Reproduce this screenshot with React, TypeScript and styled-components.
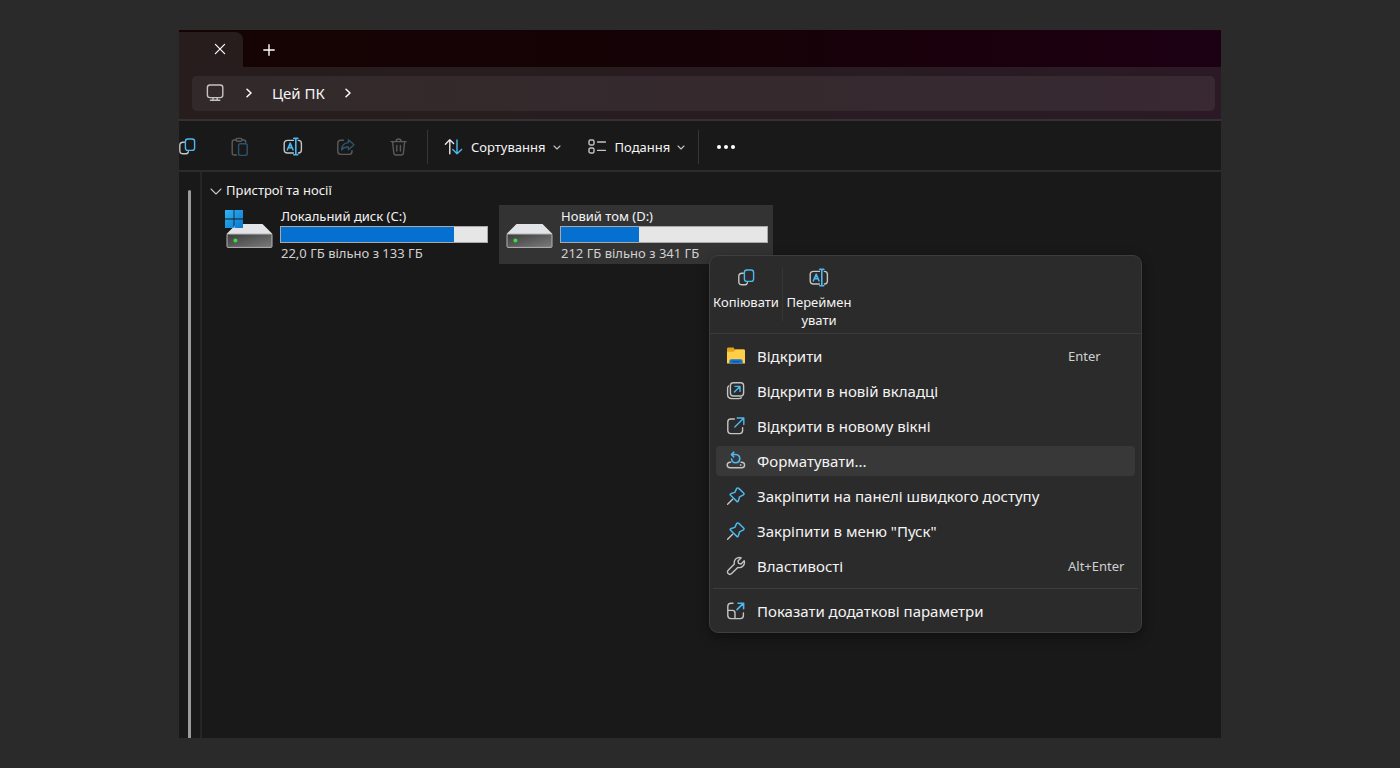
import React from "react";
import styled, { createGlobalStyle } from "styled-components";

const GlobalStyle = createGlobalStyle`
  * { box-sizing: border-box; }
  body {
    margin: 0;
    background: #2a2a2a;
    color: #f4f4f4;
    font-family: "Noto Sans", "Open Sans", sans-serif;
    font-size: 13px;
    line-height: 18px;
  }
  button {
    margin: 0;
    padding: 0;
    border: 0;
    background: none;
    color: inherit;
    font: inherit;
  }
`;

const Desktop = styled.div`
  display: flex;
  min-height: 100vh;
  padding: 30px 179px;
  background: #2a2a2a;
`;

const ExplorerWindow = styled.main`
  display: flex;
  flex: 1;
  flex-direction: column;
  min-width: 0;
  background: #191919;
`;

const TitleBar = styled.header`
  display: flex;
  align-items: flex-end;
  height: 37px;
  background: linear-gradient(90deg, #160303, #150206 50%, #1b000e 80%, #1c0014);
`;

const Tab = styled.div`
  display: flex;
  align-items: center;
  justify-content: flex-end;
  width: 64px;
  height: 35px;
  padding: 0 15px 1px 0;
  border-radius: 0 8px 0 0;
  background: #271d1d;
`;

const IconButton = styled.button`
  display: grid;
  place-items: center;
  width: 16px;
  height: 16px;
`;

const NewTabButton = styled(IconButton)`
  width: 52px;
  height: 35px;
`;

const NavBar = styled.nav`
  padding: 9px 6px 8px 13px;
  border-bottom: 2px solid #333132;
  background: linear-gradient(90deg, #271d1d, #281c20 50%, #2b1a25);
`;

const AddressBar = styled.div`
  display: flex;
  align-items: center;
  height: 35px;
  padding: 0 0 2px 13px;
  border-radius: 5px;
  background: linear-gradient(90deg, #322a2a, #35292d 50%, #382932);
`;

const Crumb = styled.button`
  display: flex;
  align-items: center;
  height: 30px;
  font-size: 15px;
  line-height: 20px;
`;

const CrumbArrow = styled.span`
  display: grid;
  place-items: center;
  width: 47px;
`;

const Toolbar = styled.div`
  display: flex;
  align-items: center;
  height: 51px;
  padding-top: 2px;
  border-bottom: 2px solid #2c2c2c;
  overflow: hidden;
`;

const ToolGroup = styled.div`
  display: flex;
  margin-left: -19px;
`;

const ToolButton = styled.button`
  display: grid;
  place-items: center;
  width: 53px;
  height: 34px;
`;

const Divider = styled.span<{ $height: number }>`
  flex: none;
  width: 1px;
  height: ${(p) => p.$height}px;
  background: #363636;
`;

const ToolDivider = styled(Divider)`
  margin-left: 2px;
`;

const MenuButton = styled.button`
  display: flex;
  align-items: center;
  gap: 7px;
  height: 34px;
  padding: 0 11px 0 16px;
`;

const Body = styled.div`
  display: flex;
  flex: 1;
`;

const SidePane = styled.aside`
  display: flex;
  width: 23px;
  padding: 18px 0 0 9px;
  border-right: 2px solid #262626;
`;

const ScrollThumb = styled.div`
  width: 3px;
  border-radius: 2px 2px 0 0;
  background: #9c9c9c;
`;

const Content = styled.section`
  flex: 1;
  min-width: 0;
  padding: 8px;
`;

const GroupHeading = styled.h2`
  display: flex;
  align-items: center;
  gap: 4px;
  margin: 0;
  font-size: 13px;
  font-weight: 400;
  line-height: 20px;
`;

const DriveGrid = styled.div`
  display: grid;
  grid-template-columns: repeat(auto-fill, 274px);
  gap: 6px;
  margin-top: 5px;
  padding-left: 9px;
`;

const DriveTile = styled.article<{ $selected?: boolean }>`
  position: relative;
  display: flex;
  gap: 6px;
  height: 59px;
  padding: 2px 5px 0 6px;
  background: ${(p) => (p.$selected ? "#333333" : "transparent")};
`;

const DriveInfo = styled.div`
  flex: 1;
  min-width: 0;
`;

const DriveText = styled.div<{ $dim?: boolean }>`
  padding-left: 1px;
  color: ${(p) => (p.$dim ? "#d0d0d0" : "#f4f4f4")};
  white-space: nowrap;
`;

const UsageBar = styled.div`
  height: 17px;
  margin: 1px 0;
  border: 1px solid #a9a9a9;
  background: #e6e6e6;
`;

const UsageFill = styled.div`
  height: 100%;
  background: #0570cf;
`;

const ContextMenu = styled.div`
  position: absolute;
  z-index: 1;
  top: 50px;
  left: 210px;
  width: 433px;
  border: 1px solid #3e3e3e;
  border-radius: 9px;
  background: #2b2b2b;
  box-shadow: 0 4px 12px rgba(0, 0, 0, 0.4);
`;

const QuickActions = styled.div`
  display: flex;
  align-items: flex-start;
  height: 78px;
  padding-top: 12px;
  border-bottom: 1px solid #3a3a3a;
`;

const QuickAction = styled.button`
  display: flex;
  flex-direction: column;
  align-items: center;
  gap: 5px;
  width: 72px;
  line-height: 18px;
`;

const MenuList = styled.div`
  display: flex;
  flex-direction: column;
  gap: 5px;
  padding: 7px 6px 6px;
`;

const MenuItem = styled.button<{ $active?: boolean }>`
  display: flex;
  align-items: center;
  height: 30px;
  padding: 0 0 1px 10px;
  border-radius: 4px;
  background: ${(p) => (p.$active ? "#383838" : "transparent")};
  font-size: 15px;
  line-height: 20px;
  text-align: left;
`;

const MenuLabel = styled.span`
  flex: 1;
  padding-left: 11px;
  white-space: nowrap;
`;

const Shortcut = styled.kbd`
  width: 67px;
  color: #cfcfcf;
  font-family: inherit;
  font-size: 13px;
`;

const MenuSeparator = styled.hr`
  height: 1px;
  margin: 2px -3px;
  border: 0;
  background: #3d3d3d;
`;

const BLUE = "#4cb8f0";
const GRAY = "#c4c4c4";

type IconProps = { size?: number; children: React.ReactNode; opacity?: number };

const Icon = ({ size = 20, children, opacity = 1 }: IconProps) => (
  <svg
    width={size}
    height={size}
    viewBox={`0 0 ${size} ${size}`}
    fill="none"
    stroke={GRAY}
    strokeWidth={1.4}
    strokeLinecap="round"
    strokeLinejoin="round"
    opacity={opacity}
    aria-hidden="true"
  >
    {children}
  </svg>
);

const CopyIcon = () => (
  <Icon>
    <path d="M7.4 5.2H6Q2.8 5.2 2.8 8.5V13.5Q2.8 16.8 6 16.8H8.4Q11 16.8 11.4 14.8" />
    <rect x="8.4" y="2" width="9.2" height="11.4" rx="2.4" stroke={BLUE} />
  </Icon>
);

const PasteIcon = () => (
  <Icon opacity={0.38}>
    <path d="M6.5 3H4.2Q2.2 3 2.2 5V16Q2.2 18 4.2 18H6.5M12 3H13.8Q15.8 3 15.8 5.2" />
    <rect x="6" y="1.4" width="6" height="2.8" rx="1.4" />
    <rect x="8.6" y="6.8" width="8.6" height="11.6" rx="1.8" stroke={BLUE} />
  </Icon>
);

const RenameIcon = () => (
  <Icon>
    <path d="M10.4 3.4H4.6Q1.2 3.4 1.2 6.6V12.8Q1.2 16 4.6 16H10.4M15.4 3.4Q18.4 3.5 18.4 6.4V13Q18.4 15.9 15.4 16" />
    <path d="M4.4 12.8L7.2 6.2L10 12.8M5.4 10.6H9" stroke={BLUE} strokeWidth={1.6} />
    <path d="M12.8 1.6V17.6M10.8 1.4H14.8M10.8 17.8H14.8" stroke={BLUE} strokeWidth={1.6} />
  </Icon>
);

const ShareIcon = () => (
  <Icon opacity={0.38}>
    <path d="M7.5 3.2H5Q1.8 3.2 1.8 6V14.6Q1.8 17.4 5 17.4H13.2Q16 17.4 16 14.6V13.6" />
    <path d="M12.4 2.8L18 7.8L12.4 12.8V10Q7.6 9.6 5.6 13Q6 6 12.4 5.6Z" stroke={BLUE} />
  </Icon>
);

const TrashIcon = () => (
  <Icon opacity={0.38}>
    <path d="M2 4.6H17.2M7 4.4Q7.2 2 9.6 2T12.2 4.4M3.6 4.8L4.8 16Q5 18 7 18H12.2Q14.2 18 14.4 16L15.6 4.8M7.8 8.4V14M11.4 8.4V14" />
  </Icon>
);

const SortIcon = () => (
  <Icon>
    <path d="M5.8 16.8V3M1.4 7.2L5.8 2.8L9.6 6.6" stroke="#e8e8e8" />
    <path d="M13 3V16.4M8.8 12.6L13 16.8L17.6 12.4" stroke={BLUE} />
  </Icon>
);

const ViewIcon = () => (
  <Icon>
    <rect x="1" y="3" width="5" height="5" rx="1.6" />
    <rect x="1" y="11" width="5" height="5" rx="1.6" />
    <path d="M9.6 5H17.4M9.6 13.4H17.4" />
  </Icon>
);

const MonitorIcon = () => (
  <Icon>
    <rect x="2.4" y="2" width="15.4" height="12.6" rx="2.6" />
    <path d="M8 14.6V17M12.2 14.6V17M5.4 17.2H14.8" />
  </Icon>
);

const FolderIcon = () => (
  <svg width="20" height="20" viewBox="0 0 20 20" aria-hidden="true">
    <path d="M1 2.8Q1 1.6 2.2 1.6H7.4L9 3.4H17.6Q19 3.4 19 4.6V10H1Z" fill="#e5a21a" />
    <path d="M1 5.8H6.8Q7.8 5.8 8.6 5L9.4 3.6H18Q19 3.8 19 5.2V17.4H1Z" fill="#ffcf48" />
    <path d="M3.4 17.6V15Q3.4 13.2 5.2 13.2H14.8Q16.6 13.2 16.6 15V17.6Z" fill="#1474cf" />
    <path d="M6.6 15.8H13.4" stroke="#0b4f9c" />
  </svg>
);

const OpenTabIcon = () => (
  <Icon>
    <rect x="4.4" y="1.8" width="13.2" height="13.2" rx="3" />
    <path d="M2.6 5Q1.6 5.8 1.6 7.4V13.6Q1.6 17.6 6 17.6H12.6Q14.4 17.6 15.4 16.8" />
    <path d="M8.4 11L13.6 5.8M9 5.4H14V10.4" stroke={BLUE} />
  </Icon>
);

const OpenWindowIcon = () => (
  <Icon>
    <path d="M8.4 3H4.8Q1.8 3 1.8 6V14.6Q1.8 17.6 4.8 17.6H13.6Q16.6 17.6 16.6 14.6V11.6" />
    <path d="M8.8 11L17.4 2.4M11.2 2H17.8V8.6" stroke={BLUE} />
  </Icon>
);

const FormatIcon = () => (
  <Icon>
    <path d="M4.6 11.2H4.2Q1.2 11.4 1.2 14T4.2 16.8H15.6Q18.6 16.8 18.6 14T15.6 11.2H15M14.4 14H15" />
    <path d="M5.6 3.5H9.6Q13.8 4 13.8 7.6Q13.4 11.8 9.6 11.8Q5.8 11.6 5.6 8M7.8 1.2L5.4 3.5L7.8 5.8" stroke={BLUE} strokeWidth={1.6} />
  </Icon>
);

const PinIcon = () => (
  <Icon>
    <path d="M1.6 18.2L6.6 13.2" />
    <path
      d="M10.6 2.6Q11.6 1.4 12.8 2.4L17.6 7Q18.6 8 17.4 8.8L13.6 10.8L12.2 15.2Q11.6 16.2 10.8 15.4L4.4 9Q3.8 8.2 4.6 7.8L8.8 6.4Z"
      stroke={BLUE}
      strokeWidth={1.5}
    />
  </Icon>
);

const WrenchIcon = () => (
  <Icon>
    <path d="M15.2 1.8A5.2 5.2 0 0 0 8.4 8L2.2 14.2A2.3 2.3 0 0 0 5.6 17.6L11.8 11.4A5.2 5.2 0 0 0 18.2 4.8L15 8L12.6 7.4L12 5Z" />
  </Icon>
);

const MoreOptionsIcon = () => (
  <Icon>
    <path d="M7 2.2H5Q1.8 2.2 1.8 5.4V14.6Q1.8 17.6 5 17.6H14.4Q17.4 17.6 17.4 14.6V12M1.8 9.4H6.4Q9 9.4 9 12V17.6" />
    <path d="M11 8.6L17 2.6M12 2.2H17.6V7.8" stroke={BLUE} strokeWidth={1.6} />
  </Icon>
);

const ChevronRight = () => (
  <Icon size={10}>
    <path d="M3 1.2L7 5L3 8.8" stroke="#fff" strokeWidth={1.5} />
  </Icon>
);

const ChevronDown = ({ size = 8 }: { size?: number }) => (
  <Icon size={size}>
    <path d={`M1 ${size / 2 - 1}L${size / 2} ${size - 2}L${size - 1} ${size / 2 - 1}`} strokeWidth={1.1} />
  </Icon>
);

const CloseIcon = () => (
  <Icon size={12}>
    <path d="M1.4 1.4L10.6 10.6M10.6 1.4L1.4 10.6" stroke="#fff" strokeWidth={1.2} />
  </Icon>
);

const PlusIcon = () => (
  <Icon size={12}>
    <path d="M6 0.8V11.2M0.8 6H11.2" stroke="#fff" />
  </Icon>
);

const DotsIcon = () => (
  <svg width="20" height="6" viewBox="0 0 20 6" fill="#fff" aria-hidden="true">
    <circle cx="3" cy="3" r="2" />
    <circle cx="10" cy="3" r="2" />
    <circle cx="17" cy="3" r="2" />
  </svg>
);

const DriveIcon = ({ system }: { system?: boolean }) => (
  <svg width="49" height="44" viewBox="0 0 49 44" aria-hidden="true">
    <defs>
      <linearGradient id="case" x1="0" y1="0" x2="1" y2="1">
        <stop offset="0" stopColor="#3c3c3c" />
        <stop offset="1" stopColor="#7b7b7b" />
      </linearGradient>
      <linearGradient id="logo" x1="0" y1="0" x2="1" y2="1">
        <stop offset="0" stopColor="#2fb4f2" />
        <stop offset="1" stopColor="#0a76d0" />
      </linearGradient>
    </defs>
    <path d="M11.5 17H37.5L47.5 27H1.5Z" fill="#e3e4e8" />
    <rect x="2" y="27" width="45" height="13.4" rx="1" fill="url(#case)" stroke="#b5b5b5" />
    <circle cx="10.4" cy="33.4" r="2" fill="#35e335" />
    {system && <path d="M0 3H8.6V11.6H0ZM9.4 3H18V11.6H9.4ZM0 12.4H8.6V21H0ZM9.4 12.4H18V21H9.4Z" fill="url(#logo)" />}
  </svg>
);

type DriveProps = {
  name: string;
  free: string;
  used: number;
  system?: boolean;
  selected?: boolean;
  children?: React.ReactNode;
};

const Drive = ({ name, free, used, system, selected, children }: DriveProps) => (
  <DriveTile $selected={selected}>
    <DriveIcon system={system} />
    <DriveInfo>
      <DriveText>{name}</DriveText>
      <UsageBar role="meter" aria-label={name} aria-valuemin={0} aria-valuemax={100} aria-valuenow={used}>
        <UsageFill style={{ width: `${used}%` }} />
      </UsageBar>
      <DriveText $dim>{free}</DriveText>
    </DriveInfo>
    {children}
  </DriveTile>
);

const menuItems = [
  { label: "Відкрити", icon: <FolderIcon />, shortcut: "Enter" },
  { label: "Відкрити в новій вкладці", icon: <OpenTabIcon /> },
  { label: "Відкрити в новому вікні", icon: <OpenWindowIcon /> },
  { label: "Форматувати...", icon: <FormatIcon />, active: true },
  { label: "Закріпити на панелі швидкого доступу", icon: <PinIcon /> },
  { label: 'Закріпити в меню "Пуск"', icon: <PinIcon /> },
  { label: "Властивості", icon: <WrenchIcon />, shortcut: "Alt+Enter" },
];

const DriveMenu = () => (
  <ContextMenu role="menu">
    <QuickActions>
      <QuickAction role="menuitem">
        <CopyIcon />
        <span>Копіювати</span>
      </QuickAction>
      <Divider $height={53} />
      <QuickAction role="menuitem">
        <RenameIcon />
        <span>
          Переймен
          <wbr />
          увати
        </span>
      </QuickAction>
    </QuickActions>
    <MenuList>
      {menuItems.map((item) => (
        <MenuItem key={item.label} role="menuitem" $active={item.active}>
          {item.icon}
          <MenuLabel>{item.label}</MenuLabel>
          {item.shortcut && <Shortcut>{item.shortcut}</Shortcut>}
        </MenuItem>
      ))}
      <MenuSeparator />
      <MenuItem role="menuitem">
        <MoreOptionsIcon />
        <MenuLabel>Показати додаткові параметри</MenuLabel>
      </MenuItem>
    </MenuList>
  </ContextMenu>
);

export default function App() {
  return (
    <Desktop>
      <GlobalStyle />
      <ExplorerWindow>
        <TitleBar>
          <Tab>
            <IconButton aria-label="Закрити вкладку">
              <CloseIcon />
            </IconButton>
          </Tab>
          <NewTabButton aria-label="Нова вкладка">
            <PlusIcon />
          </NewTabButton>
        </TitleBar>
        <NavBar>
          <AddressBar>
            <Crumb aria-label="Комп’ютер">
              <MonitorIcon />
            </Crumb>
            <CrumbArrow>
              <ChevronRight />
            </CrumbArrow>
            <Crumb>Цей ПК</Crumb>
            <CrumbArrow>
              <ChevronRight />
            </CrumbArrow>
          </AddressBar>
        </NavBar>
        <Toolbar>
          <ToolGroup>
            <ToolButton aria-label="Копіювати">
              <CopyIcon />
            </ToolButton>
            <ToolButton aria-label="Вставити">
              <PasteIcon />
            </ToolButton>
            <ToolButton aria-label="Перейменувати">
              <RenameIcon />
            </ToolButton>
            <ToolButton aria-label="Поділитися">
              <ShareIcon />
            </ToolButton>
            <ToolButton aria-label="Видалити">
              <TrashIcon />
            </ToolButton>
          </ToolGroup>
          <ToolDivider $height={34} />
          <MenuButton>
            <SortIcon />
            Сортування
            <ChevronDown />
          </MenuButton>
          <MenuButton>
            <ViewIcon />
            Подання
            <ChevronDown />
          </MenuButton>
          <ToolDivider $height={34} />
          <ToolButton aria-label="Додатково">
            <DotsIcon />
          </ToolButton>
        </Toolbar>
        <Body>
          <SidePane>
            <ScrollThumb />
          </SidePane>
          <Content>
            <GroupHeading>
              <ChevronDown size={12} />
              Пристрої та носії
            </GroupHeading>
            <DriveGrid>
              <Drive name="Локальний диск (C:)" free="22,0 ГБ вільно з 133 ГБ" used={84} system />
              <Drive name="Новий том (D:)" free="212 ГБ вільно з 341 ГБ" used={38} selected>
                <DriveMenu />
              </Drive>
            </DriveGrid>
          </Content>
        </Body>
      </ExplorerWindow>
    </Desktop>
  );
}
